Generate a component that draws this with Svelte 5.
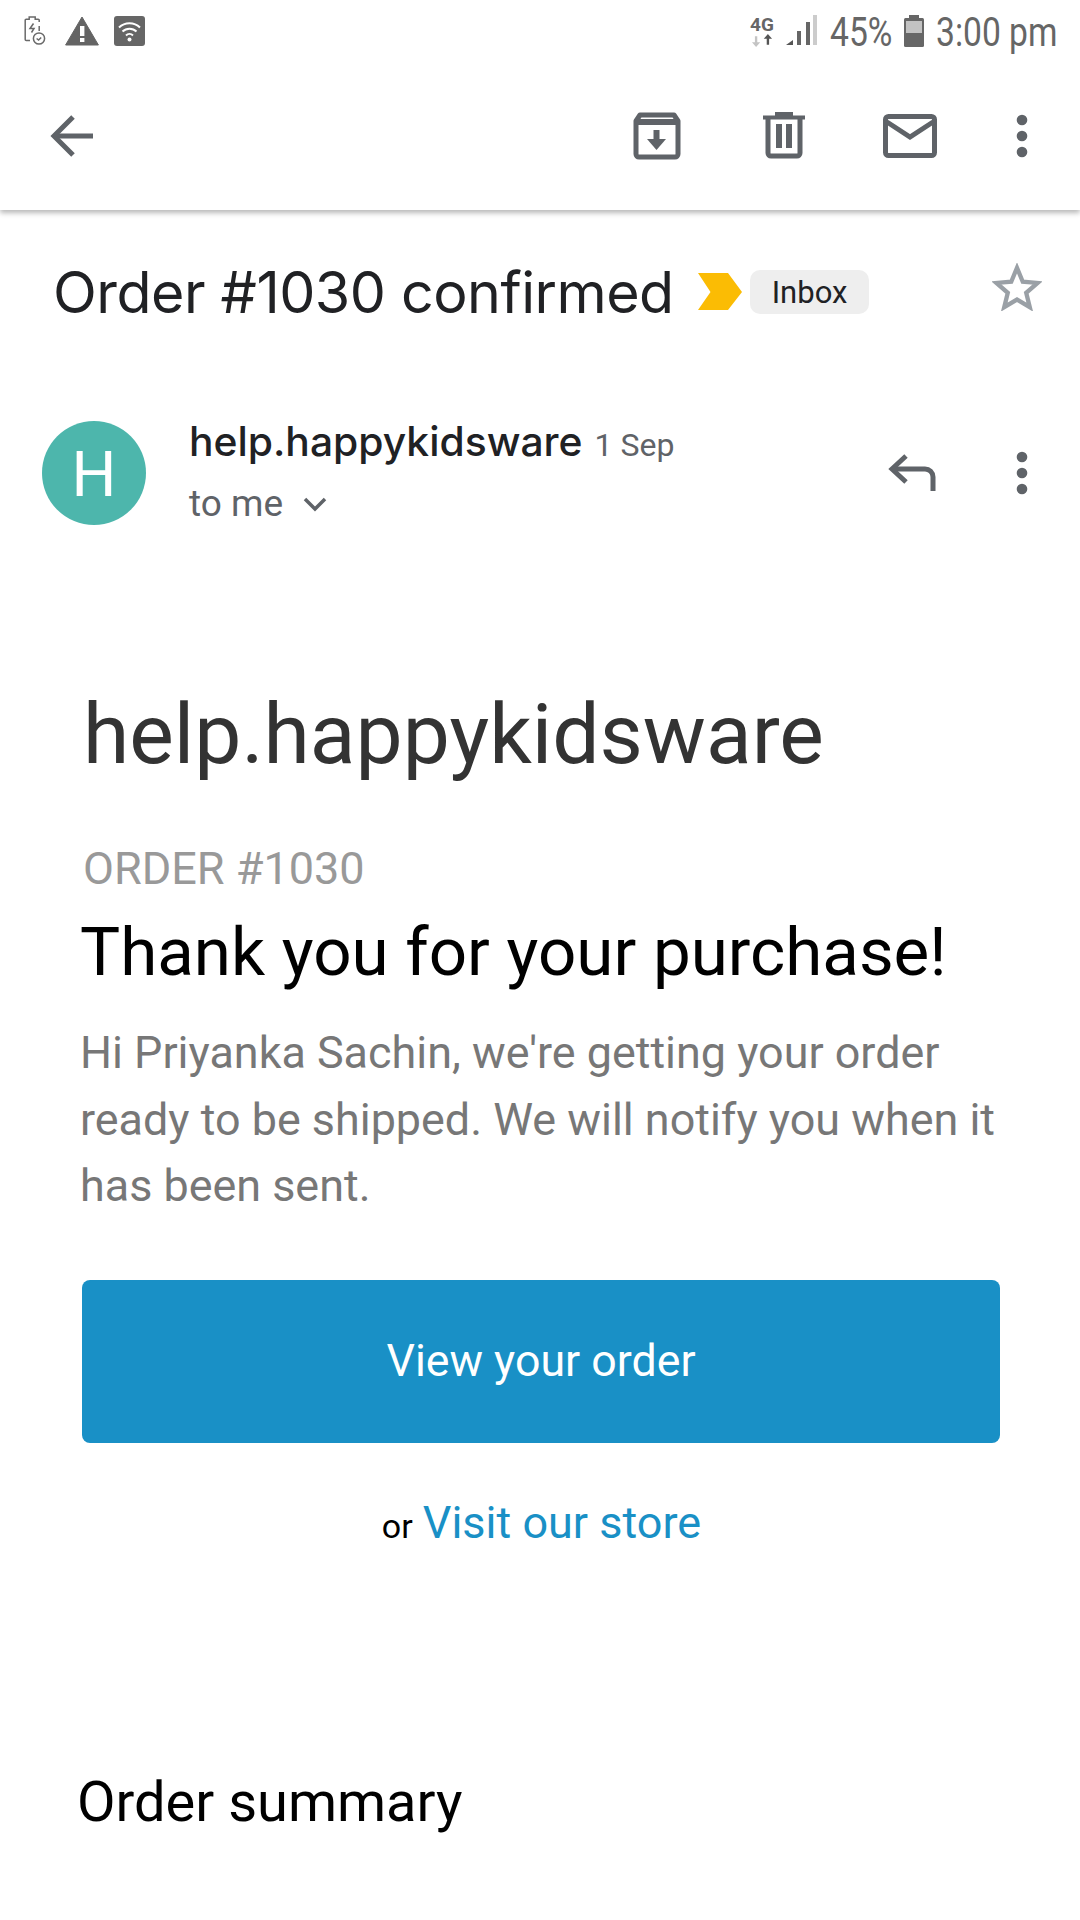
<script>
	const bodyLines = [
		"Hi Priyanka Sachin, we're getting your order",
		'ready to be shipped. We will notify you when it',
		'has been sent.'
	];
</script>

<div class="screen">
	<div class="statusbar">
		<div class="statusbar__left">
			<svg class="statusbar__batt" viewBox="0 0 22 30" width="22" height="30" fill="none" stroke="#6a6a6a" stroke-width="1.5">
				<path d="M6 24.5H2.2a1 1 0 0 1-1-1V4.2a1 1 0 0 1 1-1h3V1h6v2.2h3a1 1 0 0 1 1 1V6" />
				<path d="M15.2 10v5" />
				<path d="M9.5 7.500 6 12.500h4l-2.500 4" />
				<circle cx="15" cy="22.500" r="5.600" />
				<path d="M12.600 22.500l2 1.600 2.600-2.600" />
			</svg>
			<svg viewBox="0 0 34 30" width="34" height="30">
				<path d="M17 1 L33.4 29 H.6Z" fill="#646464" stroke="#646464" stroke-linejoin="round" />
				<rect x="15" y="10" width="4.4" height="10" fill="#fff" />
				<rect x="15" y="22" width="4.4" height="4" fill="#fff" />
			</svg>
			<svg viewBox="0 0 31 30" width="31" height="30">
				<rect width="31" height="30" rx="3" fill="#666" />
				<g fill="none" stroke="#fff" stroke-width="2">
					<path d="M5 11.5a15 15 0 0 1 21 0" />
					<path d="M8.5 15.5a10 10 0 0 1 14 0" />
					<path d="M12 19.5a5 5 0 0 1 7 0" />
				</g>
				<circle cx="15.5" cy="23.5" r="2" fill="#fff" />
			</svg>
		</div>
		<div class="statusbar__right">
			<div class="net">
				<span class="net__label">4G</span>
				<svg viewBox="0 0 20 11" width="24" height="13">
					<path d="M5 11 1.5 7H4V2h2v5h2.5Z" fill="#c4c4c4" />
					<path d="M15 0l3.5 4H16v5h-2V4h-2.500Z" fill="#555" />
				</svg>
			</div>
			<svg class="signal" viewBox="0 0 32 32" width="32" height="32">
				<path d="M0 30 7 25V30Z" fill="#555" />
				<rect x="11" y="16" width="4" height="14" fill="#666" />
				<rect x="20" y="7" width="4" height="23" fill="#666" />
				<rect x="27" y="0" width="4" height="30" fill="#ccc" />
			</svg>
			<span class="status-text status-text--pct">45%</span>
			<svg class="battery" viewBox="0 0 20 32" width="20" height="32">
				<rect x="5" y="0" width="10" height="4" fill="#666" />
				<rect x="0" y="3" width="20" height="29" rx="1.500" fill="#666" />
				<rect x="2" y="6" width="16" height="12" fill="#c2c2c2" />
			</svg>
			<span class="status-text status-text--time">3:00 pm</span>
		</div>
	</div>

	<header class="appbar">
		<svg class="appbar__back" viewBox="0 0 44 44" width="44" height="44" fill="none" stroke="#5f6368" stroke-width="5">
			<path d="M43 22H4" />
			<path d="M23 3 4 22l19 19" />
		</svg>
		<div class="appbar__actions">
			<svg viewBox="0 0 48 48" width="48" height="48" fill="none" stroke="#5f6368" stroke-width="5">
				<path d="M3 9 7 3h34l4 6V42a3 3 0 0 1-3 3H6a3 3 0 0 1-3-3Z" stroke-linejoin="round" />
				<path d="M4 10h40" stroke-width="6" />
				<path d="M23.500 18v12" stroke-width="6" />
				<path d="M14 27h19L23.500 38Z" fill="#5f6368" stroke="none" />
			</svg>
			<svg class="appbar__trash" viewBox="0 0 44 48" width="44" height="48" fill="none" stroke="#5f6368" stroke-width="5">
				<path d="M1 5.500h42" stroke-width="4" />
				<path d="M13 2h18" stroke-width="4" />
				<path d="M6 6v35a3 3 0 0 0 3 3h26a3 3 0 0 0 3-3V6" />
				<path d="M17 12v24M27 12v24" stroke-width="6" />
			</svg>
			<svg viewBox="0 0 54 44" width="54" height="44" fill="none" stroke="#5f6368" stroke-width="5">
				<rect x="2.500" y="2.500" width="49" height="39" rx="3" />
				<path d="M4 8l23 15L50 8" />
			</svg>
			<svg class="dots" viewBox="0 0 12 44" width="12" height="44" fill="#5f6368">
				<circle cx="6" cy="6" r="5.300" />
				<circle cx="6" cy="22" r="5.300" />
				<circle cx="6" cy="38" r="5.300" />
			</svg>
		</div>
	</header>

	<main class="mail">
		<div class="subject">
			<h1 class="subject__title">Order #1030 confirmed</h1>
			<svg class="subject__marker" viewBox="0 0 44 38" width="44" height="38">
				<path d="M0 0H30L44 19 30 37H0L12.500 19Z" fill="#fbbc04" />
			</svg>
			<span class="subject__label">Inbox</span>
			<svg class="subject__star" viewBox="0 0 52 50" width="50" height="48" fill="none" stroke="#9aa0a6" stroke-width="4.500">
				<path d="M26 5 32 19.500 47.500 20.800 35.600 31 39.300 46 26 38 12.700 46 16.400 31 4.500 20.800 20 19.500Z" />
			</svg>
		</div>

		<div class="sender">
			<div class="sender__avatar">H</div>
			<div class="sender__info">
				<div class="sender__line">
					<span class="sender__name">help.happykidsware</span>
					<span class="sender__date">1 Sep</span>
				</div>
				<div class="sender__to">
					<span>to me</span>
					<svg viewBox="0 0 24 16" width="24" height="16" fill="none" stroke="#5f6368" stroke-width="3.500">
						<path d="M2 3l10 10L22 3" />
					</svg>
				</div>
			</div>
			<div class="sender__actions">
				<svg viewBox="0 0 48 38" width="48" height="38" fill="none" stroke="#5f6368" stroke-width="5">
					<path d="M18 2 4 15l14 13" />
					<path d="M4 15h33a8 8 0 0 1 8 8v14" />
				</svg>
				<svg class="dots" viewBox="0 0 12 44" width="12" height="44" fill="#5f6368">
					<circle cx="6" cy="6" r="5.300" />
					<circle cx="6" cy="22" r="5.300" />
					<circle cx="6" cy="38" r="5.300" />
				</svg>
			</div>
		</div>

		<article class="body">
			<h2 class="body__shop">help.happykidsware</h2>
			<div class="body__order">ORDER #1030</div>
			<h3 class="body__thanks">Thank you for your purchase!</h3>
			<p class="body__text">
				{#each bodyLines as line}
					<span>{line}</span>
				{/each}
			</p>
			<div class="body__button">View your order</div>
			<div class="body__alt">
				<span class="body__or">or</span>
				<span class="body__link">Visit our store</span>
			</div>
			<h4 class="body__summary">Order summary</h4>
		</article>
	</main>
</div>

<style>
	:global(body) {
		margin: 0;
		background: #fff;
	}

	.screen {
		width: 1080px;
		height: 1920px;
		overflow: hidden;
		background: #fff;
		font-family: Roboto, sans-serif;
	}

	.statusbar {
		height: 62px;
		display: flex;
		align-items: center;
		justify-content: space-between;
		padding: 0 22px 0 24px;
	}

	.statusbar__left {
		display: flex;
		align-items: center;
		gap: 15px;
	}

	.statusbar__batt {
		margin-right: 4px;
	}

	.statusbar__right {
		display: flex;
		align-items: center;
	}

	.net {
		display: flex;
		flex-direction: column;
		align-items: center;
		margin-right: 12px;
	}

	.net__label {
		font-size: 19px;
		line-height: 18px;
		font-weight: 700;
		color: #666;
	}

	.signal {
		margin-right: 12px;
	}

	.status-text {
		margin-top: 4px;
		font-size: 40px;
		line-height: 44px;
		color: #666;
		transform: scaleX(0.84);
		transform-origin: left center;
	}

	.status-text--pct {
		width: 64px;
		margin-right: 10px;
	}

	.status-text--time {
		width: 122px;
		margin-left: 12px;
		white-space: nowrap;
	}

	.appbar {
		height: 148px;
		display: flex;
		align-items: center;
		justify-content: space-between;
		padding: 0 52px 0 50px;
		box-shadow: 0 3px 5px rgba(0, 0, 0, 0.28);
		clip-path: inset(0 0 -12px 0);
		box-sizing: border-box;
	}

	.appbar__actions {
		display: flex;
		align-items: center;
		gap: 79px;
	}

	.appbar__trash {
		margin: 0 -2px 0 2px;
	}

	.subject {
		display: flex;
		align-items: center;
		padding: 0 38px 0 53px;
		margin-top: 52px;
		height: 60px;
	}

	.subject__title {
		margin: 0;
		font-family: Inter, sans-serif;
		font-size: 57.300px;
		font-weight: 400;
		letter-spacing: -0.5px;
		color: #202124;
		white-space: nowrap;
	}

	.subject__marker {
		margin-left: 24px;
	}

	.subject__label {
		margin-left: 8px;
		padding: 0 22px;
		height: 44px;
		line-height: 46px;
		background: #eeeeee;
		border-radius: 10px;
		font-size: 31px;
		color: #202124;
	}

	.subject__star {
		margin-left: auto;
		margin-top: -10px;
	}

	.sender {
		display: flex;
		align-items: center;
		margin-top: 99px;
		padding: 0 52px 0 42px;
	}

	.sender__avatar {
		width: 104px;
		height: 104px;
		border-radius: 50%;
		background: #4db6ac;
		color: #fff;
		font-size: 63px;
		font-weight: 400;
		line-height: 107px;
		text-align: center;
	}

	.sender__info {
		margin-left: 43px;
		flex: 1;
	}

	.sender__line {
		margin-top: -5px;
	}

	.sender__name {
		font-family: Inter, sans-serif;
		font-size: 40.800px;
		font-weight: 500;
		color: #202124;
	}

	.sender__date {
		margin-left: 8px;
		font-size: 32px;
		color: #5f6368;
	}

	.sender__to {
		display: flex;
		align-items: center;
		gap: 20px;
		margin-top: 16px;
		font-size: 37px;
		color: #5f6368;
	}

	.sender__actions {
		display: flex;
		align-items: center;
		gap: 80px;
	}

	.body {
		padding: 0 80px;
	}

	.body__shop {
		margin: 116px 0 0 3px;
		font-size: 84px;
		line-height: 98px;
		font-weight: 400;
		color: #333;
		padding-top: 45px;
	}

	.body__order {
		margin: 60px 0 0 3px;
		font-size: 45px;
		line-height: 50px;
		color: #999;
	}

	.body__thanks {
		margin: 19px 0 0;
		font-size: 67.300px;
		line-height: 78px;
		font-weight: 400;
		color: #000;
	}

	.body__text {
		margin: 29px 0 0;
		font-size: 44.900px;
		line-height: 66.700px;
		color: #777;
	}

	.body__text span {
		display: block;
		white-space: nowrap;
	}

	.body__button {
		margin: 60px 0 0 2px;
		width: 918px;
		height: 163px;
		background: #1990c6;
		border-radius: 8px;
		color: #fff;
		font-size: 44.700px;
		line-height: 163px;
		text-align: center;
	}

	.body__alt {
		margin-top: 52px;
		padding-left: 3px;
		text-align: center;
		line-height: 56px;
	}

	.body__or {
		font-size: 34px;
		color: #000;
	}

	.body__link {
		margin-left: 6px;
		font-size: 45px;
		color: #1990c6;
	}

	.body__summary {
		margin: 209px 0 0 -3px;
		font-size: 56px;
		line-height: 64px;
		font-weight: 400;
		color: #000;
	}
</style>
